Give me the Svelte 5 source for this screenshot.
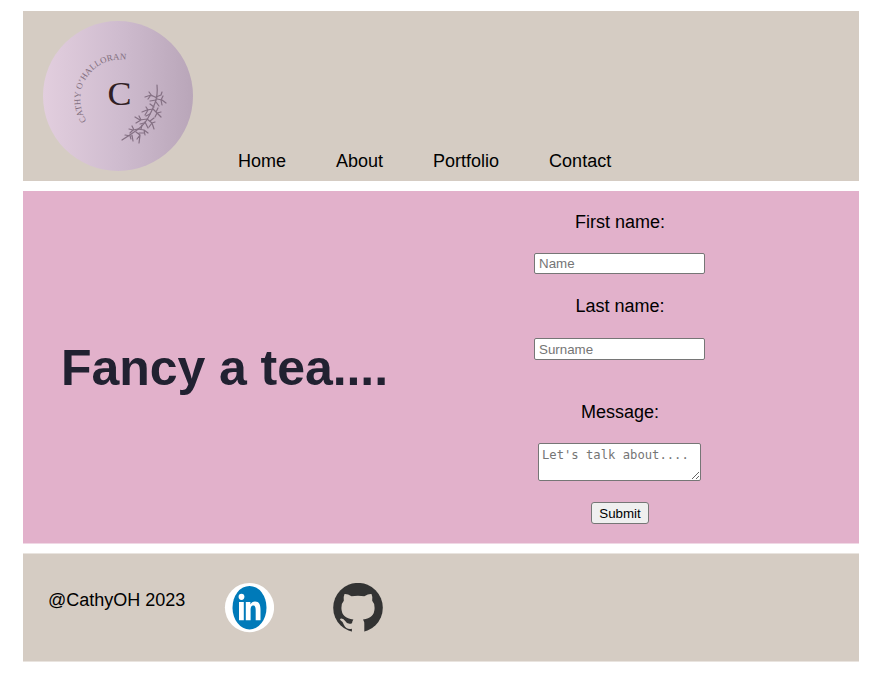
<script>
  const links = ['Home', 'About', 'Portfolio', 'Contact'];
</script>

<div class="page">
  <header>
    <svg class="logo" viewBox="0 0 150 150" width="150" height="150" role="img" aria-label="Cathy O'Halloran">
      <defs>
        <linearGradient id="disc">
          <stop offset="0" stop-color="#e2cede" />
          <stop offset="0.5" stop-color="#cfbccf" />
          <stop offset="1" stop-color="#b9a6b9" />
        </linearGradient>
        <path id="arc" d="M43.500 99.800A40 40 0 0 1 92 41.200" />
      </defs>
      <circle cx="75" cy="75" r="75" fill="url(#disc)" />
      <text class="ring"><textPath href="#arc" textLength="91">CATHY O’HALLORAN</textPath></text>
      <text class="initial" x="64.500" y="83.500" textLength="24" lengthAdjust="spacingAndGlyphs">C</text>
      <g class="branch">
        <path d="M114 64Q115 74 112 82T105 97T94 109T79 119" />
        <path d="M114 77L108 74L102 76M108 74L105 78M109 75L106 71M113 79L107 80M113 76L118 74L119 71M114 78L119 79L123 82M118 79L120 75M118 79L119 84M113 81L116 85" />
        <path d="M110 88L104 89L99 91M105 89L103 86M105 89L102 94M111 86L107 83M110 88L114 92L118 96M114 92L118 91M114 92L112 96M113 91L115 87M107 93L103 95" />
        <path d="M104 98L97 99L92 96M98 99L93 102M98 99L96 95M104 98L109 102L111 108M109 102L112 101M109 102L106 106M107 100L111 97M102 101L105 107M101 102L97 103" />
        <path d="M95 108L90 109L86 108M90 109L87 112M91 109L89 105M95 108L101 109L105 112M101 109L102 114M98 108L99 104M93 111L97 114L96 122M97 114L94 118M96 112L101 112M89 114L90 120M88 115L82 114M87 115L88 118" />
      </g>
    </svg>
    <nav>
      {#each links as link}<a href="#{link.toLowerCase()}">{link}</a>{/each}
    </nav>
  </header>

  <main>
    <h1>Fancy a tea....</h1>
    <form onsubmit={(event) => event.preventDefault()}>
      <label for="first">First name:</label>
      <input id="first" type="text" placeholder="Name" />
      <label for="last">Last name:</label>
      <input id="last" class="last" type="text" placeholder="Surname" />
      <label for="message">Message:</label>
      <textarea id="message" placeholder="Let's talk about...."></textarea>
      <button type="submit">Submit</button>
    </form>
  </main>

  <footer>
    <p>@CathyOH 2023</p>
    <svg class="linkedin" viewBox="0 0 50 50" width="50" height="50" role="img" aria-label="LinkedIn">
      <circle cx="25.500" cy="24.600" r="24.600" fill="#fff" />
      <ellipse cx="25.500" cy="24.700" rx="17" ry="21.800" fill="#007ab9" />
      <g fill="#fff">
        <ellipse cx="17.500" cy="13.800" rx="2.900" ry="3.100" />
        <path d="M15 18.900h4.800v18.300H15zM21.800 18.900h4.600v2.500c.9-1.800 2.500-2.900 4.600-2.900 4.300 0 5.500 3.500 5.500 8.200v10.500h-4.800v-9.400c0-2.700-.2-5.200-2.400-5.200-2.300 0-2.700 2.300-2.700 5v9.600h-4.800z" />
      </g>
    </svg>
    <svg class="github" viewBox="0 0 50 50" width="50" height="50" role="img" aria-label="GitHub">
      <circle cx="25" cy="24.700" r="24.800" fill="#333" />
      <path fill="#d5ccc3" d="M11.500 11Q14.500 10.700 18.500 13.300Q25 12 31.300 13.300Q35.500 10.700 38.500 11Q40 14.500 39.200 17.800Q41.800 20.500 41.600 25Q41.500 35.300 30 36.500Q31.300 38.500 31.300 40.800V50H18.900V45.700C15.500 46.500 12.500 45.500 11 42Q9.800 38.500 7.500 37.200Q6.200 35.600 8.500 35.400Q10.700 35.500 12.200 38Q14.500 42 19 40.300Q19.200 38 20.400 36.500Q8.500 35.200 8.400 25Q8.200 20.500 10.800 17.800Q10 14.500 11.500 11Z" />
    </svg>
  </footer>
</div>

<style>
  :global(body) {
    background: #fff;
  }

  .page {
    box-sizing: border-box;
    width: 886px;
    height: 678px;
    padding: 11px 27px 0 23px;
    display: flex;
    flex-direction: column;
    gap: 10px;
    font: 18px/21px "Liberation Sans", Arial, sans-serif;
    color: #000;
  }

  header,
  footer {
    display: flex;
    background: #d5ccc3;
    box-sizing: border-box;
  }

  header {
    height: 170px;
    padding: 10px 20px 9px;
  }

  .logo {
    display: block;
  }

  .ring {
    font: 8.800px "Liberation Serif", serif;
    fill: #806d7c;
  }

  .initial {
    font: 34.500px "Liberation Serif", serif;
    fill: #302024;
  }

  .branch {
    fill: none;
    stroke: #847083;
    stroke-width: 1.200;
    stroke-linecap: round;
    stroke-linejoin: round;
  }

  nav {
    display: flex;
    align-items: flex-end;
    gap: 50px;
    margin-left: 45px;
  }

  nav a {
    color: inherit;
    text-decoration: none;
  }

  main {
    height: 352px;
    box-sizing: border-box;
    display: grid;
    grid-template-columns: 402px 389px;
    align-items: center;
    background: #e2b1cb;
    box-shadow: 0 1px #f0d8e5;
  }

  h1 {
    margin: 2px 0 0 38px;
    font-size: 50px;
    line-height: 58px;
    letter-spacing: -0.060px;
    color: #212131;
    white-space: nowrap;
  }

  form {
    align-self: start;
    padding-top: 21px;
    display: flex;
    flex-direction: column;
    align-items: center;
  }

  label {
    height: 21px;
    margin-bottom: 21px;
    padding-left: 1px;
  }

  input,
  textarea {
    box-sizing: border-box;
    border: 1px solid #767676;
    border-radius: 2px;
    background: #fff;
  }

  input {
    width: 171px;
    height: 21px;
    margin: -1px 0 22px;
    padding: 1px 3px 1px 4px;
    font: 13.333px "Liberation Sans", Arial, sans-serif;
  }

  .last {
    height: 22px;
    margin: 0 0 42px;
  }

  textarea {
    width: 163px;
    height: 38px;
    margin-top: -1px;
    padding: 4px 2px 4px 3px;
    font: 12.200px/15px "DejaVu Sans Mono", monospace;
  }

  ::placeholder {
    color: #757575;
    opacity: 1;
  }

  button {
    box-sizing: border-box;
    width: 58px;
    height: 22px;
    margin-top: 21px;
    padding: 0 0 0 1px;
    border: 1px solid #767676;
    border-radius: 3px;
    background: #efefef;
    color: #000;
    font: 13.333px "Liberation Sans", Arial, sans-serif;
  }

  footer {
    height: 108px;
    padding: 29px 25px;
    align-items: flex-start;
    border-top: 1px solid #e9e4df;
    box-shadow: 0 1px #e9e4df;
  }

  footer p {
    width: 138px;
    margin: 7px 0 0;
    white-space: nowrap;
  }

  .linkedin {
    margin-left: 38px;
  }

  .github {
    margin-left: 58.500px;
  }
</style>
